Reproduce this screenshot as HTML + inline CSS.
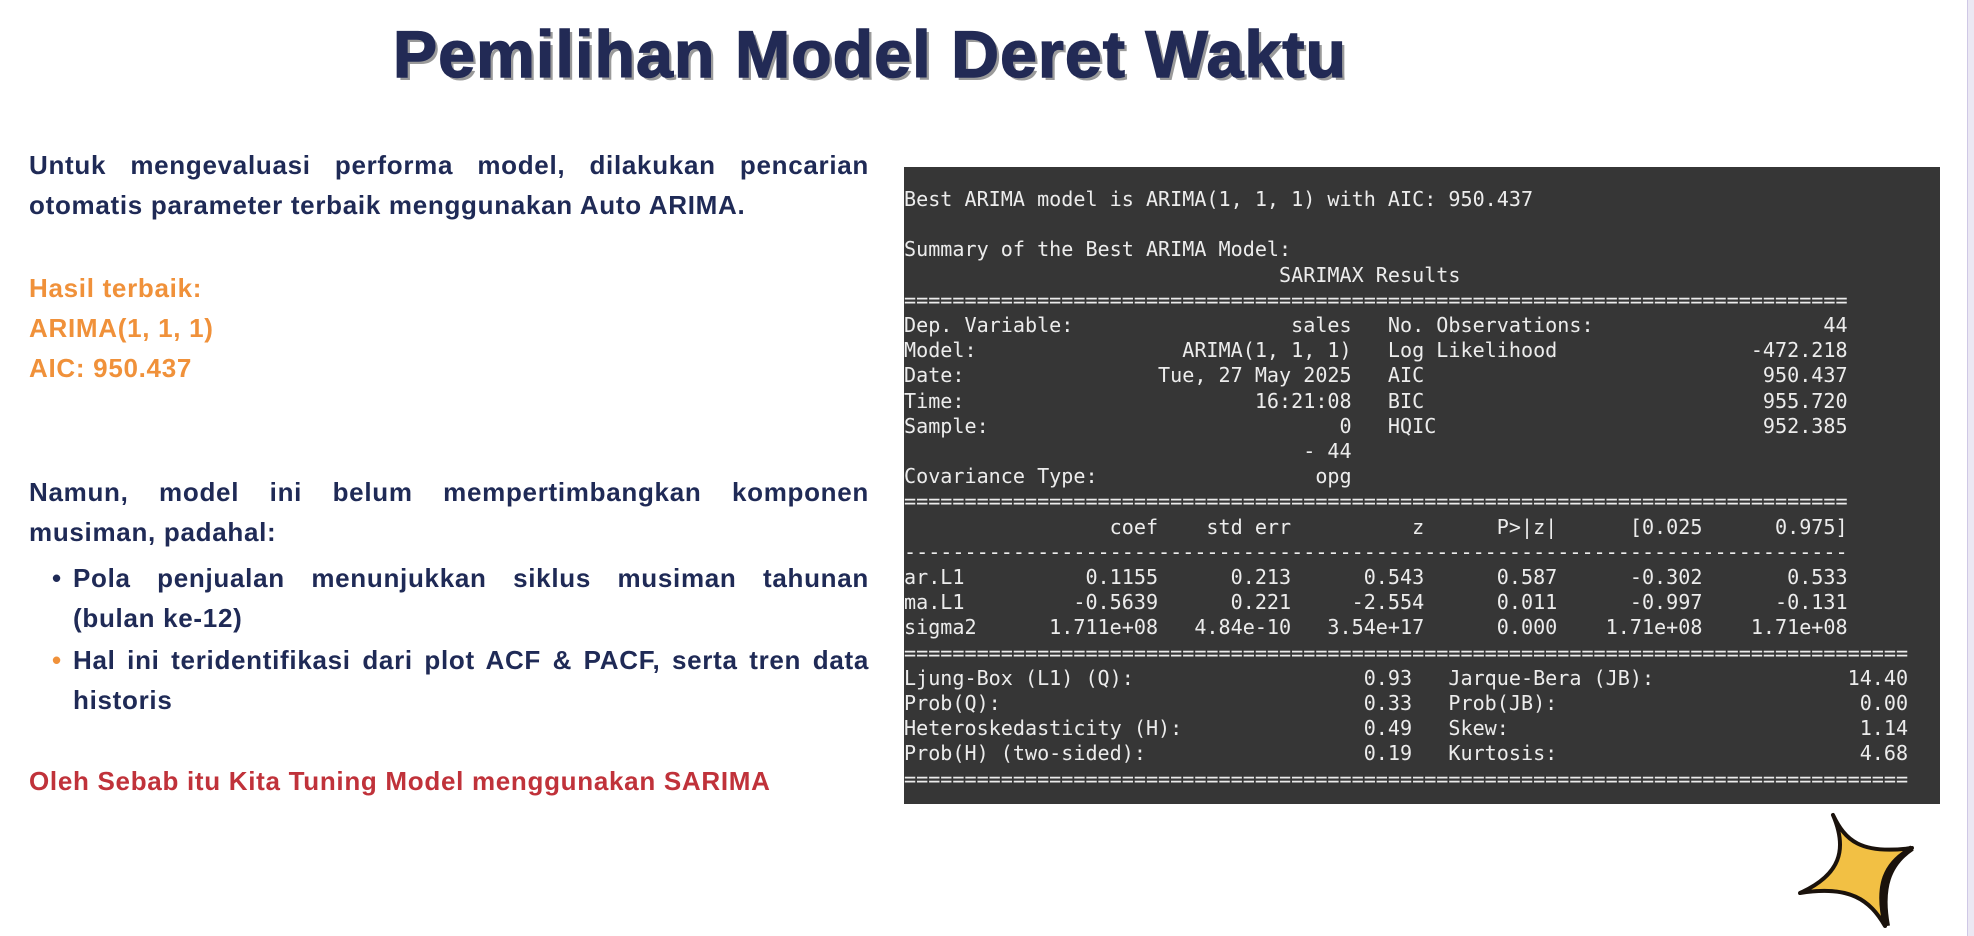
<!DOCTYPE html>
<html><head><meta charset="utf-8"><style>
body{margin:0;width:1974px;height:936px;background:#fff;position:relative;overflow:hidden;font-family:"Liberation Sans",sans-serif}
.t{position:absolute;left:393px;top:16px;font-size:66px;font-weight:bold;color:#222a55;text-shadow:3px 3px 0 #9a9a9a;white-space:nowrap;letter-spacing:1.2px;-webkit-text-stroke:1.5px #222a55}
.p{position:absolute;left:29px;width:840px;font-size:26px;font-weight:bold;line-height:40px;color:#1f2a56;text-align:justify;letter-spacing:0.7px}
.o{color:#f0913a}
.r{color:#c0323a}
.b{position:absolute;left:52px;font-size:26px;font-weight:bold;line-height:40px}
.term{position:absolute;left:904px;top:167px;width:1036px;height:637px;background:#363636}
pre{margin:0;position:absolute;left:0;top:187px;font-family:"DejaVu Sans Mono",monospace;font-size:20.1px;line-height:25.2px;color:#ececec}
.edge{position:absolute;left:1967px;top:0;width:7px;height:936px;background:#ebe8f3;border-left:1px solid #cfc8e6}
</style></head><body>
<div class="t">Pemilihan Model Deret Waktu</div>
<div class="p" style="top:145px">Untuk mengevaluasi performa model, dilakukan pencarian otomatis parameter terbaik menggunakan Auto ARIMA.</div>
<div class="p o" style="top:268px;text-align:left">Hasil terbaik:<br>ARIMA(1, 1, 1)<br>AIC: 950.437</div>
<div class="p" style="top:472px">Namun, model ini belum mempertimbangkan komponen musiman, padahal:</div>
<div class="b" style="top:558px;color:#1f2a56">•</div>
<div class="p" style="top:558px;left:73px;width:796px"><div style="text-align-last:justify">Pola penjualan menunjukkan siklus musiman tahunan</div><div>(bulan ke-12)</div></div>
<div class="b o" style="top:640px">•</div>
<div class="p" style="top:640px;left:73px;width:796px">Hal ini teridentifikasi dari plot ACF &amp; PACF, serta tren data historis</div>
<div class="p r" style="top:761px;text-align:left">Oleh Sebab itu Kita Tuning Model menggunakan SARIMA</div>
<div class="term"></div>
<pre style="left:904px">Best ARIMA model is ARIMA(1, 1, 1) with AIC: 950.437

Summary of the Best ARIMA Model:
                               SARIMAX Results                                
==============================================================================
Dep. Variable:                  sales   No. Observations:                   44
Model:                 ARIMA(1, 1, 1)   Log Likelihood                -472.218
Date:                Tue, 27 May 2025   AIC                            950.437
Time:                        16:21:08   BIC                            955.720
Sample:                             0   HQIC                           952.385
                                 - 44                                         
Covariance Type:                  opg                                         
==============================================================================
                 coef    std err          z      P>|z|      [0.025      0.975]
------------------------------------------------------------------------------
ar.L1          0.1155      0.213      0.543      0.587      -0.302       0.533
ma.L1         -0.5639      0.221     -2.554      0.011      -0.997      -0.131
sigma2      1.711e+08   4.84e-10   3.54e+17      0.000    1.71e+08    1.71e+08
===================================================================================
Ljung-Box (L1) (Q):                   0.93   Jarque-Bera (JB):                14.40
Prob(Q):                              0.33   Prob(JB):                         0.00
Heteroskedasticity (H):               0.49   Skew:                             1.14
Prob(H) (two-sided):                  0.19   Kurtosis:                         4.68
===================================================================================</pre>
<svg style="position:absolute;left:1790px;top:805px" width="135" height="130" viewBox="1790 805 135 130">
<path d="M1833 815 C1845 840 1860 855 1912 848 C1885 862 1875 885 1885 926 C1870 900 1850 885 1800 893 C1840 875 1848 850 1833 815 Z" fill="#f2c044" stroke="#1a120c" stroke-width="4" stroke-linejoin="round"/>
<path d="M1912 848 C1888 864 1880 888 1887 926" fill="none" stroke="#1a120c" stroke-width="6"/>
</svg>
<div class="edge"></div>
</body></html>
